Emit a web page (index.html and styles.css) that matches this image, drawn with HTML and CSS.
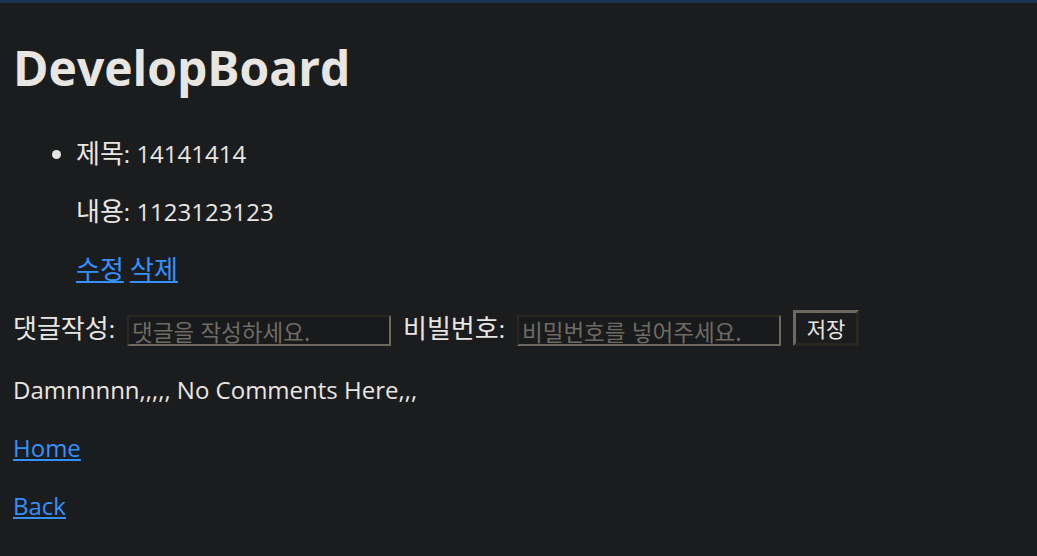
FILE: index.html
```html
<!DOCTYPE html>
<html lang="ko">
<head>
<meta charset="utf-8">
<title>DevelopBoard</title>
<link rel="stylesheet" href="styles.css">
</head>
<body>
<div class="topbar"></div>
<main class="page">
  <h1 class="title">DevelopBoard</h1>
  <ul class="post">
    <li>
      <p class="line"><span class="ko">제목</span>: 14141414</p>
      <p class="line"><span class="ko">내용</span>: 1123123123</p>
      <p class="line"><a class="ko" href="#">수정</a> <a class="ko" href="#">삭제</a></p>
    </li>
  </ul>
  <form class="comment-form">
    <label class="label" for="c"><span class="ko">댓글작성</span>:</label>
    <input class="field" id="c" type="text" placeholder="댓글을 작성하세요.">
    <label class="label" for="pw"><span class="ko">비빌번호</span>:</label>
    <input class="field" id="pw" type="text" placeholder="비밀번호를 넣어주세요.">
    <button class="save" type="button">저장</button>
  </form>
  <p class="line empty">Damnnnnn,,,,, No Comments Here,,,</p>
  <p class="line"><a href="#">Home</a></p>
  <p class="line"><a href="#">Back</a></p>
</main>
</body>
</html>
```
FILE: styles.css
```css
html, body {
  margin: 0;
  padding: 0;
  background: #1b1c1e;
}
body {
  color: #e8e6e3;
  font-family: "Open Sans", "Noto Sans CJK KR", sans-serif;
  font-size: 24px;
}
.topbar {
  height: 3px;
  background: #1b3357;
}
.page {
  padding: 0 12px 0 13px;
}
.title {
  margin: 0;
  padding-top: 33px;
  font-size: 48px;
  line-height: 64px;
  font-weight: 700;
  padding-bottom: 37px;
}
.post {
  margin: 0;
  padding-left: 63px;
  list-style: disc;
}
.line {
  margin: 0 0 24px;
  line-height: 34px;
}
.ko {
  font-family: "Noto Sans CJK KR", sans-serif;
  font-size: 26px;
  line-height: 1;
}
.post li .line:last-child {
  margin-bottom: 23px;
}
a {
  color: #3391ff;
}
.comment-form {
  display: flex;
  align-items: flex-end;
  gap: 12px;
  margin-bottom: 27px;
}
.label {
  line-height: 34px;
}
.field {
  box-sizing: border-box;
  width: 264px;
  height: 31px;
  margin: 0;
  padding: 0 3px;
  background: #181a1b;
  color: #e8e6e3;
  font-family: "Noto Sans CJK KR", sans-serif;
  font-size: 22.5px;
  border: 2px solid;
  border-color: #2a2620 #6e685e #6e685e #2a2620;
}
.field::placeholder {
  color: #6f6b64;
}
.save {
  box-sizing: border-box;
  width: 66px;
  height: 36px;
  margin: 0;
  padding: 0;
  background: #1b1c1e;
  color: #e8e6e3;
  font-family: "Noto Sans CJK KR", sans-serif;
  font-size: 21px;
  border: 3px solid;
  border-color: #6e685e #2a2620 #2a2620 #6e685e;
}
```
